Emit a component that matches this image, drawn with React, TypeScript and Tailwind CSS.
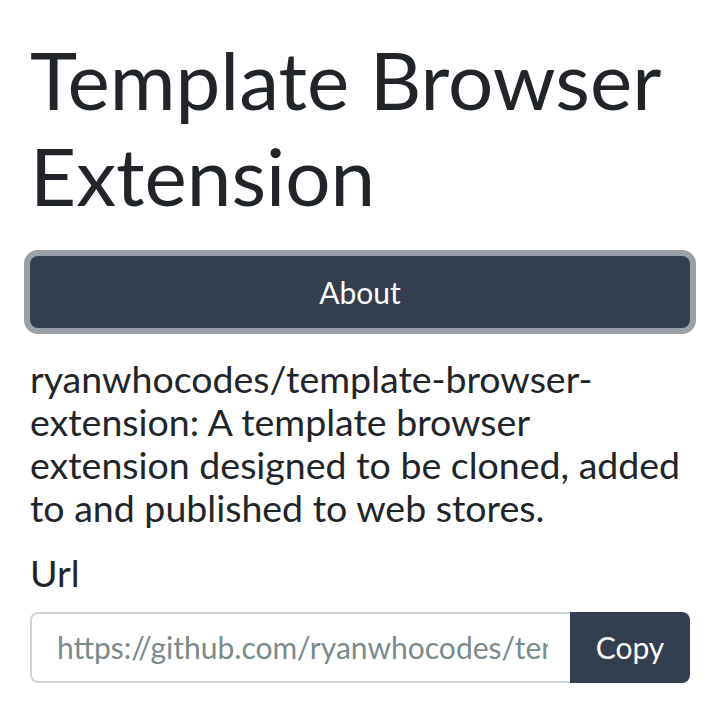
import React from "react";

export default function App() {
  return (
    <div className="px-[30px] pt-[31px] text-[#212529] font-['Lato',sans-serif]">
      <h1 className="text-[80px] leading-[96px] font-normal m-0">Template Browser Extension</h1>
      <button className="mt-[33px] w-full h-[72px] bg-[#333f4f] text-white rounded-[8px] text-[30px] font-normal ring-[6px] ring-[#9aa0a8]">
        About
      </button>
      <p className="mt-[29px] text-[37.5px] leading-[43px]">
        ryanwhocodes/template-browser-extension: A template browser extension designed to be cloned, added to and published to web stores.
      </p>
      <p className="mt-[22px] text-[37.5px] leading-[43px]">Url</p>
      <div className="mt-[18px] flex h-[71px]">
        <input
          readOnly
          value="https://github.com/ryanwhocodes/template-browser-extension"
          className="flex-1 min-w-0 border-2 border-[#ced4da] border-r-0 rounded-l-[8px] pl-[25px] pr-[22px] text-[30px] text-[#7b8a8b] font-['Lato',sans-serif] outline-none bg-white"
        />
        <button className="w-[120px] bg-[#333f4f] text-white rounded-r-[8px] text-[30px]">Copy</button>
      </div>
    </div>
  );
}
